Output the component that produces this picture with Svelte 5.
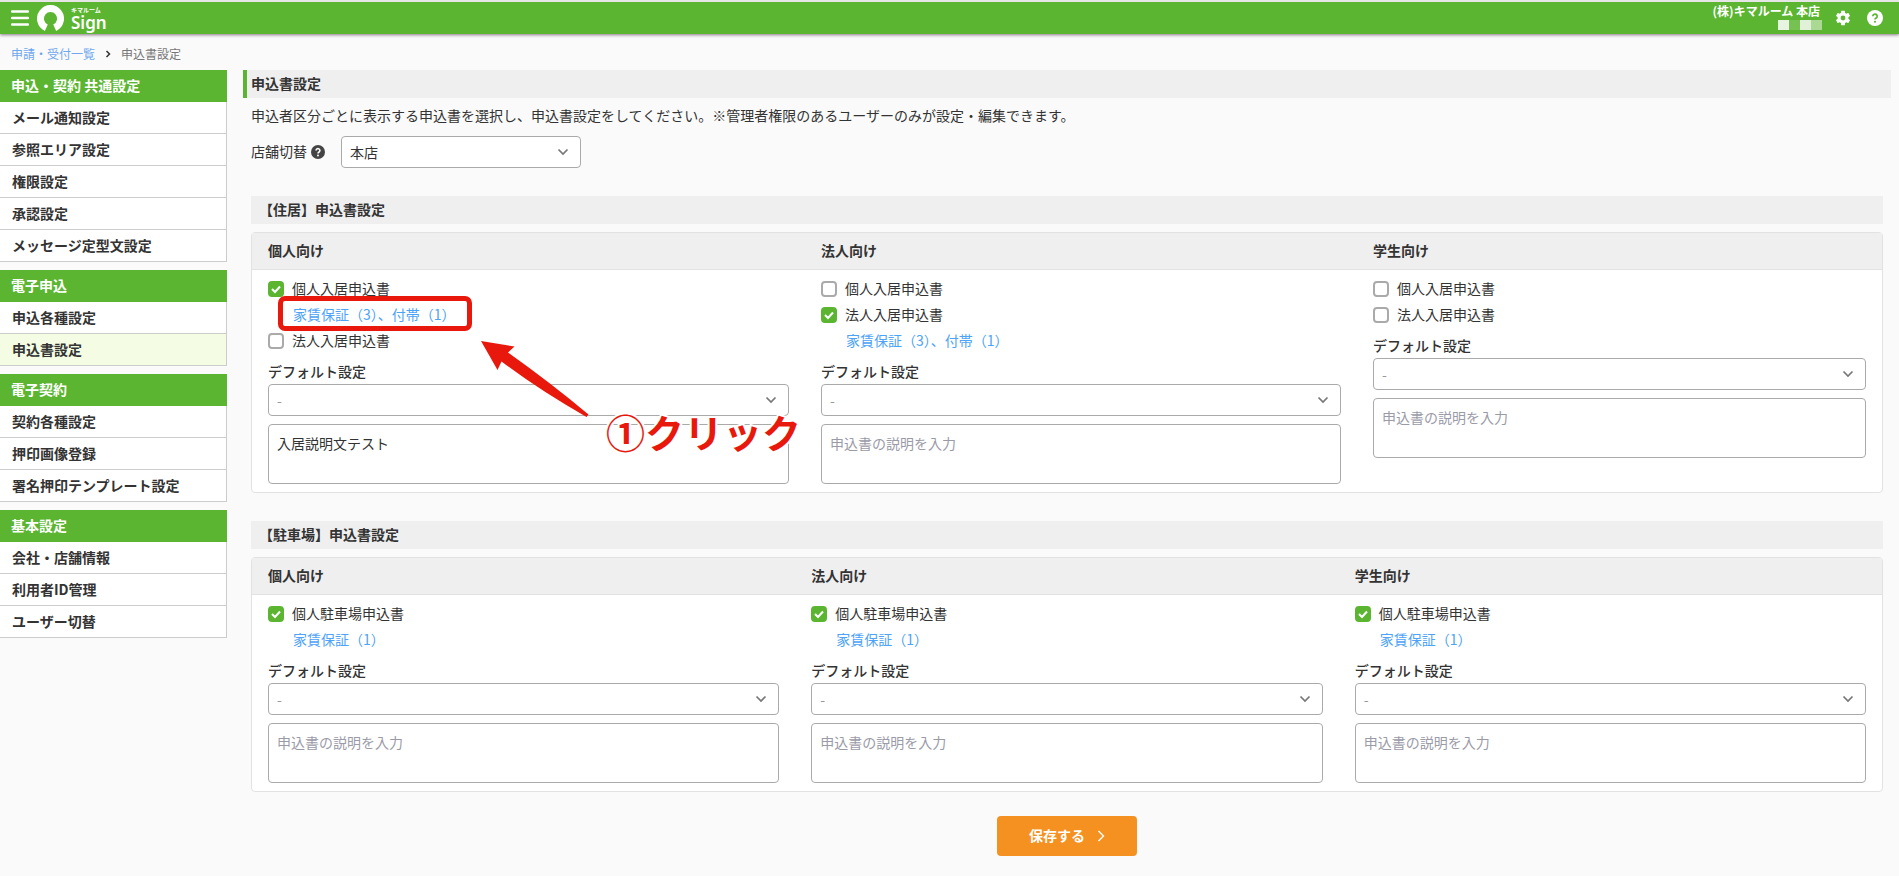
<script>
  const menus = [
    { title: '申込・契約 共通設定', items: ['メール通知設定', '参照エリア設定', '権限設定', '承認設定', 'メッセージ定型文設定'] },
    { title: '電子申込', items: ['申込各種設定', '申込書設定'] },
    { title: '電子契約', items: ['契約各種設定', '押印画像登録', '署名押印テンプレート設定'] },
    { title: '基本設定', items: ['会社・店舗情報', '利用者ID管理', 'ユーザー切替'] }
  ];
  const current = '電子申込/申込書設定';

  const sections = [
    {
      id: 'house',
      title: '【住居】申込書設定',
      widths: [553, 552, 525],
      columns: [
        {
          name: '個人向け',
          note: '入居説明文テスト',
          forms: [
            { label: '個人入居申込書', checked: true, link: '家賃保証（3）、付帯（1）', marked: true },
            { label: '法人入居申込書', checked: false }
          ]
        },
        {
          name: '法人向け',
          note: '',
          forms: [
            { label: '個人入居申込書', checked: false },
            { label: '法人入居申込書', checked: true, link: '家賃保証（3）、付帯（1）' }
          ]
        },
        {
          name: '学生向け',
          note: '',
          forms: [
            { label: '個人入居申込書', checked: false },
            { label: '法人入居申込書', checked: false }
          ]
        }
      ]
    },
    {
      id: 'parking',
      title: '【駐車場】申込書設定',
      widths: [1, 1, 1],
      columns: ['個人向け', '法人向け', '学生向け'].map((name) => ({
        name,
        note: '',
        forms: [{ label: '個人駐車場申込書', checked: true, link: '家賃保証（1）' }]
      }))
    }
  ];

  const share = (widths, i) => (100 * widths[i]) / widths.reduce((a, b) => a + b, 0);
</script>

<header class="topbar">
  <button class="icon-button" type="button" aria-label="メニュー">
    <svg width="18" height="16" viewBox="0 0 18 16"><path d="M1 1.500h16M1 8h16M1 14.500h16" stroke="#fff" stroke-width="2.400" stroke-linecap="round" /></svg>
  </button>
  <a class="brand" href="#top">
    <svg width="27" height="27" viewBox="0 0 27 27" aria-hidden="true">
      <path d="M9.300 22.700A10 10 0 1 1 17.700 22.700" fill="none" stroke="#fff" stroke-width="7" />
    </svg>
    <span class="brand-text"><small>キマルーム</small><b>Sign</b></span>
  </a>
  <div class="account">
    <span class="company">(株)キマルーム 本店</span>
    <span class="user"><i></i><i></i><i></i><i></i></span>
  </div>
  <button class="icon-button gear" type="button" aria-label="設定">
    <svg width="18" height="18" viewBox="0 0 24 24"><path fill="#fff" d="M19.140 12.940c.04-.3.060-.61.060-.94 0-.32-.02-.64-.07-.94l2.030-1.580c.18-.14.230-.41.120-.61l-1.920-3.320c-.12-.22-.37-.29-.59-.22l-2.390.96c-.5-.38-1.030-.7-1.620-.94l-.36-2.540c-.04-.24-.24-.41-.48-.41h-3.840c-.24 0-.43.170-.47.410l-.36 2.540c-.59.240-1.130.570-1.620.940l-2.390-.96c-.22-.08-.47 0-.59.220L2.740 8.870c-.12.210-.08.470.120.610l2.030 1.580c-.05.3-.09.630-.09.940s.02.640.070.940l-2.030 1.580c-.18.140-.23.410-.12.610l1.920 3.320c.12.220.370.290.590.220l2.390-.96c.5.380 1.030.7 1.620.940l.36 2.540c.05.240.240.410.480.410h3.840c.24 0 .44-.17.470-.41l.36-2.540c.59-.24 1.130-.56 1.620-.94l2.390.96c.22.080.470 0 .59-.22l1.920-3.320c.12-.22.070-.47-.12-.61l-2.010-1.580zM12 15.200a3.200 3.200 0 1 1 0-6.400 3.200 3.200 0 0 1 0 6.400z" /></svg>
  </button>
  <button class="icon-button" type="button" aria-label="ヘルプ">
    <svg width="16" height="16" viewBox="0 0 16 16"><circle cx="8" cy="8" r="8" fill="#fff" /><path d="M5.800 6.300a2.200 2.100 0 1 1 3.400 1.700c-.8.500-1.200.8-1.200 1.600" fill="none" stroke="#5bb531" stroke-width="1.700" /><circle cx="8" cy="11.800" r="1.050" fill="#5bb531" /></svg>
  </button>
</header>

<nav class="breadcrumb" aria-label="パンくず">
  <a href="#list">申請・受付一覧</a>
  <svg width="6" height="8" viewBox="0 0 6 8"><path d="M1.500 1l3 3-3 3" fill="none" stroke="#333" stroke-width="1.500" /></svg>
  <span>申込書設定</span>
</nav>

<div class="layout">
  <nav class="sidebar" aria-label="設定メニュー">
    {#each menus as menu}
      <section>
        <h2>{menu.title}</h2>
        <ul>
          {#each menu.items as item}
            <li><a href="#menu" class:active={current === `${menu.title}/${item}`}>{item}</a></li>
          {/each}
        </ul>
      </section>
    {/each}
  </nav>

  <main>
    <h1>申込書設定</h1>
    <div class="content">
      <p class="lead">申込者区分ごとに表示する申込書を選択し、申込書設定をしてください。※管理者権限のあるユーザーのみが設定・編集できます。</p>
      <div class="shop">
        <label for="shop">店舗切替</label>
        <svg width="14" height="14" viewBox="0 0 16 16" aria-hidden="true"><circle cx="8" cy="8" r="8" fill="#444" /><path d="M5.800 6.300a2.200 2.100 0 1 1 3.400 1.700c-.8.500-1.200.8-1.200 1.600" fill="none" stroke="#fff" stroke-width="1.800" /><circle cx="8" cy="11.900" r="1.100" fill="#fff" /></svg>
        <div class="select shop-select">
          <select id="shop"><option>本店</option></select>
          <svg width="12" height="8" viewBox="0 0 12 8"><path d="M1.500 1.500L6 6l4.500-4.500" fill="none" stroke="#777" stroke-width="1.700" /></svg>
        </div>
      </div>

      {#each sections as section}
        <h2 class="section-title">{section.title}</h2>
        <div class="panel">
          <table>
            <colgroup>
              {#each section.columns as _, i}
                <col style="width: {share(section.widths, i)}%" />
              {/each}
            </colgroup>
            <thead>
              <tr>
                {#each section.columns as column}<th scope="col">{column.name}</th>{/each}
              </tr>
            </thead>
            <tbody>
              <tr>
                {#each section.columns as column, c}
                  <td>
                    {#each column.forms as form}
                      <label class="check">
                        <input type="checkbox" checked={form.checked} />
                        <span>{form.label}</span>
                      </label>
                      {#if form.link}
                        <div class="detail">
                          <a href="#detail">{form.link}</a>
                          {#if form.marked}
                            <span class="frame"></span>
                            <svg class="arrow" width="110" height="78" viewBox="0 0 110 78" aria-hidden="true"><path d="M0 0L33.500 5.500 27 11.500Q70 42 107.500 73.500L105.500 76Q58 49 20.500 20.500L16.500 29Z" fill="#e8190c" /></svg>
                            <strong class="callout">①クリック</strong>
                          {/if}
                        </div>
                      {/if}
                    {/each}
                    <label class="field-label" for="{section.id}-default-{c}">デフォルト設定</label>
                    <div class="select">
                      <select class="empty" id="{section.id}-default-{c}"><option>-</option></select>
                      <svg width="12" height="8" viewBox="0 0 12 8"><path d="M1.500 1.500L6 6l4.500-4.500" fill="none" stroke="#777" stroke-width="1.700" /></svg>
                    </div>
                    <textarea placeholder="申込書の説明を入力" aria-label="申込書の説明" value={column.note}></textarea>
                  </td>
                {/each}
              </tr>
            </tbody>
          </table>
        </div>
      {/each}

      <button class="save" type="button">
        <span>保存する</span>
        <svg width="8" height="12" viewBox="0 0 8 12"><path d="M1.500 1l5 5-5 5" fill="none" stroke="#fff" stroke-width="1.400" /></svg>
      </button>
    </div>
  </main>
</div>

<style>
  :global(body) {
    background: #fafafa;
    color: #333;
    font-family: 'Noto Sans CJK JP', 'Noto Sans', sans-serif;
    font-size: 14px;
    line-height: 18px;
  }
  :global(*) { box-sizing: border-box; }
  h1, h2, p, ul { margin: 0; padding: 0; }
  h1, h2 { font-size: 14px; font-weight: 700; }
  a { text-decoration: none; }
  svg { display: block; flex: none; }
  button, select, textarea { font: inherit; color: inherit; }

  .topbar {
    display: flex;
    align-items: center;
    height: 34px;
    padding: 0 16px 0 11px;
    background: #5bb531;
    border-top: 2px solid #e6e6e6;
    box-shadow: 0 1px 3px rgba(60, 30, 60, 0.6);
    color: #fff;
  }
  .icon-button { padding: 0; border: 0; background: none; }
  .gear { margin: 0 15px 0 12px; }
  .brand { display: flex; align-items: center; gap: 7px; margin-left: 8px; color: #fff; }
  .brand-text { display: flex; flex-direction: column; padding-top: 2px; }
  .brand-text small { font-size: 6px; line-height: 8px; font-weight: 700; }
  .brand-text b { font: 600 17px/18px 'Noto Sans', sans-serif; }
  .account { display: flex; flex-direction: column; align-items: flex-end; margin-left: auto; }
  .company { padding: 0 2px 2px 0; font-size: 12px; line-height: 14px; font-weight: 700; }
  .user { display: flex; height: 12px; }
  .user i { width: 11px; height: 10px; background: #e8f4e2; }
  .user i:nth-child(2) { background: #76c152; }
  .user i:nth-child(3) { background: #e0f1d8; }
  .user i:nth-child(4) { background: #a9d993; }

  .breadcrumb {
    display: flex;
    align-items: center;
    gap: 10px;
    height: 36px;
    padding: 4px 11px 0;
    font-size: 12px;
    color: #777;
  }
  .breadcrumb a { color: #6fa8ee; }

  .layout { display: flex; align-items: flex-start; gap: 16px; padding-right: 8px; }
  .sidebar { display: flex; flex-direction: column; gap: 8px; flex: none; width: 227px; }
  .sidebar h2 { padding: 6px 11px 8px; background: #5bb531; color: #fff; }
  .sidebar ul { list-style: none; }
  .sidebar a {
    display: block;
    padding: 6px 12px 7px;
    background: #fff;
    border: solid #ccc;
    border-width: 0 1px 1px 0;
    color: #333;
    font-weight: 700;
  }
  .sidebar a.active { background: #f4fde3; }

  main { flex: 1; min-width: 0; }
  h1 { padding: 4px 4px 6px; border-left: 4px solid #5bb531; background: #efefef; }
  .content { padding: 0 8px; }
  .lead { padding: 8px 0 10px; }
  .shop { display: flex; align-items: center; gap: 4px; margin-top: 2px; }
  .shop label { padding-bottom: 2px; }
  .shop-select { width: 240px; margin-left: 12px; }
  .select { position: relative; }
  .select select {
    display: block;
    width: 100%;
    height: 32px;
    padding: 0 8px;
    border: 1px solid #aaa;
    border-radius: 4px;
    background: #fff;
    appearance: none;
  }
  .select select.empty { color: #999; }
  .select svg { position: absolute; right: 12px; top: 12px; pointer-events: none; }

  .section-title { margin-top: 28px; padding: 4px 8px 6px; background: #efefef; }
  .panel { margin-top: 8px; border: 1px solid #e2e2e2; border-radius: 4px; background: #fff; }
  table { width: 100%; border-spacing: 0; table-layout: fixed; }
  th {
    padding: 8px 16px 10px;
    border-bottom: 1px solid #e2e2e2;
    background: #efefef;
    text-align: left;
    font-weight: 700;
  }
  td { padding: 6px 16px 8px; vertical-align: top; }
  .check { display: flex; align-items: center; gap: 8px; height: 26px; }
  .check span { padding-bottom: 2px; }
  .check input {
    appearance: none;
    width: 16px;
    height: 16px;
    margin: 0;
    border: 2px solid #aaa;
    border-radius: 4px;
    background: #fff;
  }
  .check input:checked {
    border: 0;
    background: #5bb531 url("data:image/svg+xml,%3Csvg xmlns='http://www.w3.org/2000/svg' viewBox='0 0 16 16'%3E%3Cpath d='M4 8l3 3 5-5.500' fill='none' stroke='white' stroke-width='2'/%3E%3C/svg%3E");
  }
  .detail { position: relative; height: 26px; padding: 3px 0 5px 25px; }
  .detail a { color: #4da3f7; }
  .frame {
    position: absolute;
    left: 10px;
    top: -6px;
    width: 194px;
    height: 35px;
    border: 5px solid #e8190c;
    border-radius: 7px;
    pointer-events: none;
  }
  .arrow { position: absolute; left: 213px; top: 39px; z-index: 1; pointer-events: none; }
  .callout {
    position: absolute;
    left: 338px;
    top: 105px;
    color: #e8190c;
    font-size: 39px;
    line-height: 48px;
    font-weight: 700;
    white-space: nowrap;
    -webkit-text-stroke: 4px #fff;
    paint-order: stroke fill;
    z-index: 1;
  }
  .field-label { display: block; margin: 8px 0 4px; font-weight: 500; }
  textarea {
    display: block;
    width: 100%;
    height: 60px;
    margin-top: 8px;
    padding: 9px 8px;
    border: 1px solid #aaa;
    border-radius: 4px;
    background: #fff;
    resize: none;
  }
  textarea::placeholder { color: #9b9ba8; }
  .save {
    display: flex;
    align-items: center;
    justify-content: center;
    gap: 12px;
    width: 140px;
    height: 40px;
    margin: 24px auto 20px;
    border: 0;
    border-radius: 4px;
    background: #f59120;
    color: #fff;
    font-weight: 700;
  }
  .save span { padding-bottom: 2px; }
</style>
